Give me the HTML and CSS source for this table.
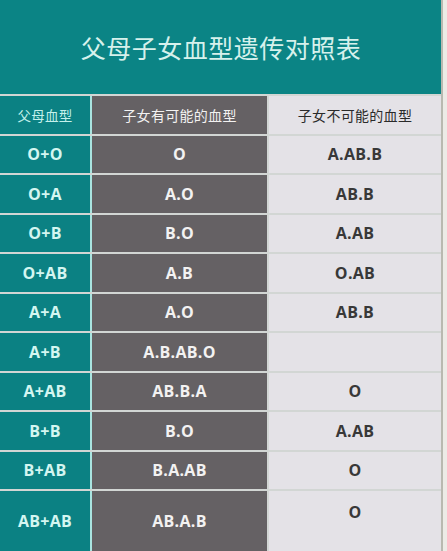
FILE: index.html
```html
<!DOCTYPE html>
<html lang="zh-CN">
<head>
<meta charset="utf-8">
<title>父母子女血型遗传对照表</title>
<link rel="stylesheet" href="styles.css">
</head>
<body>
<div class="sheet">
  <div class="title">父母子女血型遗传对照表</div>
  <div class="table">
    <div class="cell c1 head">父母血型</div>
    <div class="cell c2 head">子女有可能的血型</div>
    <div class="cell c3 head">子女不可能的血型</div>

    <div class="cell c1">O+O</div>
    <div class="cell c2">O</div>
    <div class="cell c3">A.AB.B</div>

    <div class="cell c1">O+A</div>
    <div class="cell c2">A.O</div>
    <div class="cell c3">AB.B</div>

    <div class="cell c1">O+B</div>
    <div class="cell c2">B.O</div>
    <div class="cell c3">A.AB</div>

    <div class="cell c1">O+AB</div>
    <div class="cell c2">A.B</div>
    <div class="cell c3">O.AB</div>

    <div class="cell c1">A+A</div>
    <div class="cell c2">A.O</div>
    <div class="cell c3">AB.B</div>

    <div class="cell c1">A+B</div>
    <div class="cell c2">A.B.AB.O</div>
    <div class="cell c3"></div>

    <div class="cell c1">A+AB</div>
    <div class="cell c2">AB.B.A</div>
    <div class="cell c3">O</div>

    <div class="cell c1">B+B</div>
    <div class="cell c2">B.O</div>
    <div class="cell c3">A.AB</div>

    <div class="cell c1">B+AB</div>
    <div class="cell c2">B.A.AB</div>
    <div class="cell c3">O</div>

    <div class="cell c1 last">AB+AB</div>
    <div class="cell c2 last">AB.A.B</div>
    <div class="cell c3 last top">O</div>
  </div>
</div>
</body>
</html>
```

FILE: styles.css
```css
html, body {
  margin: 0;
  padding: 0;
  background: #ecebe6;
}

body {
  width: 447px;
  height: 551px;
  overflow: hidden;
  font-family: "Open Sans", "Noto Sans CJK SC", sans-serif;
}

.sheet {
  width: 441px;
  height: 551px;
  border-right: 2px solid #b9b9b0;
  display: flex;
  flex-direction: column;
  background: #d4d8d6;
}

.title {
  height: 94px;
  flex: none;
  background: #0b8485;
  color: #d6f1ec;
  font-family: "Noto Sans CJK SC", sans-serif;
  font-size: 25px;
  font-weight: 400;
  letter-spacing: 0.5px;
  display: flex;
  align-items: center;
  justify-content: center;
  padding-left: 1px;
}

.table {
  flex: 1;
  display: grid;
  grid-template-columns: 90px 175px 172px;
  grid-template-rows: repeat(10, 37.5px) 1fr;
  column-gap: 2px;
  row-gap: 2px;
  padding-top: 2px;
  background: #d2d6d4;
}

.cell {
  display: flex;
  align-items: center;
  justify-content: center;
  font-weight: 700;
  font-size: 16px;
  letter-spacing: 0.3px;
}

.c1 {
  background: #0b8183;
  color: #d4f6f1;
  box-shadow: 2px 0 0 #a9e4e0;
}

.c2 {
  background: #656164;
  color: #f3f2f2;
}

.c3 {
  background: #e4e2e7;
  color: #383838;
}

.head {
  font-family: "Noto Sans CJK SC", sans-serif;
  font-weight: 400;
  font-size: 14px;
  letter-spacing: 0.3px;
}

.c1.head {
  color: #c4f1ec;
  font-size: 13.5px;
}

.c3.head {
  color: #2a2a2a;
}

.top {
  align-items: flex-start;
  padding-top: 10px;
}
```
